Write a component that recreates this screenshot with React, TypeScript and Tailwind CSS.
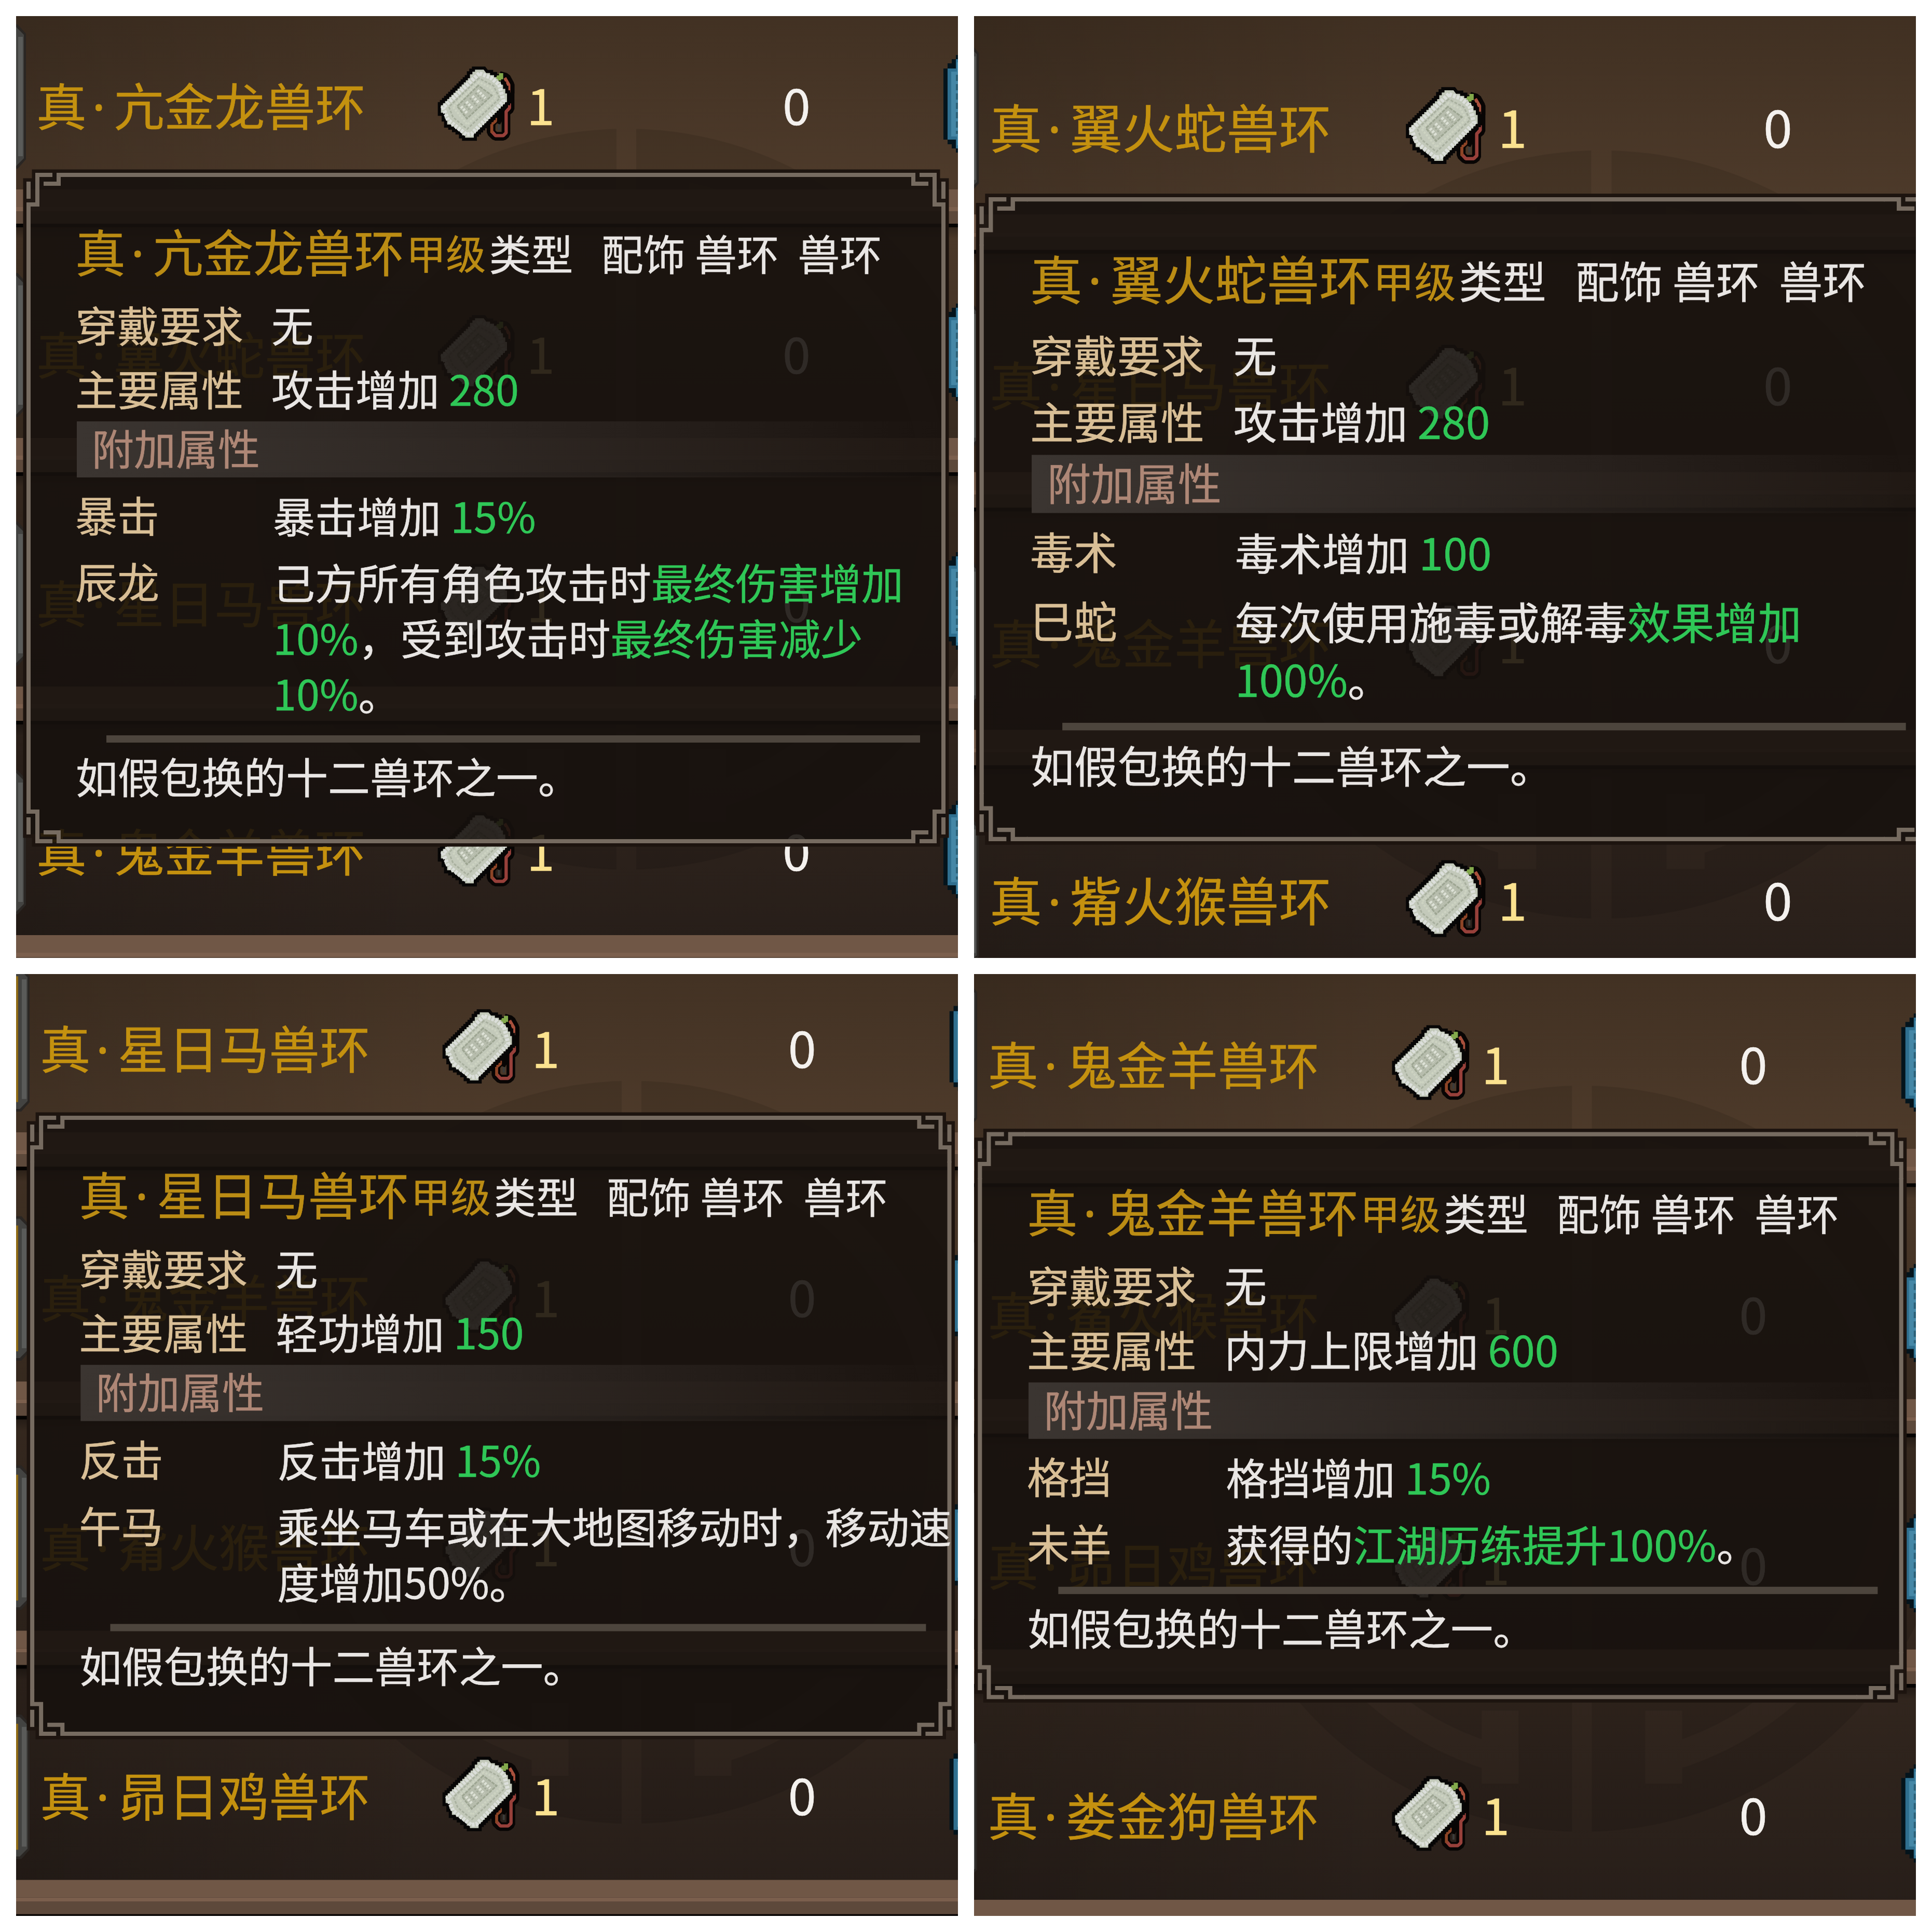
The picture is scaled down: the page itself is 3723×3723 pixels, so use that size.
type Segment = { text: string; green?: boolean };

type Trait = { label: string; lines: Segment[][] };

type Panel = {
  items: string[];
  main: Segment[];
  traits: Trait[];
  tooltipHeight: number;
  sealTop: number;
  view: { x: number; y: number; scale: number };
};

const panels: Panel[] = [
  {
    items: ['亢金龙', '翼火蛇', '星日马', '鬼金羊'],
    main: [{ text: '攻击增加 ' }, { text: '280', green: true }],
    traits: [
      { label: '暴击', lines: [[{ text: '暴击增加 ' }, { text: '15%', green: true }]] },
      {
        label: '辰龙',
        lines: [
          [{ text: '己方所有角色攻击时' }, { text: '最终伤害增加', green: true }],
          [{ text: '10%', green: true }, { text: '，受到攻击时' }, { text: '最终伤害减少', green: true }],
          [{ text: '10%', green: true }, { text: '。' }],
        ],
      },
    ],
    tooltipHeight: 1292,
    sealTop: 288,
    view: { x: -20, y: -72, scale: 1 },
  },
  {
    items: ['翼火蛇', '星日马', '鬼金羊', '觜火猴'],
    main: [{ text: '攻击增加 ' }, { text: '280', green: true }],
    traits: [
      { label: '毒术', lines: [[{ text: '毒术增加 ' }, { text: '100', green: true }]] },
      {
        label: '巳蛇',
        lines: [
          [{ text: '每次使用施毒或解毒' }, { text: '效果增加', green: true }],
          [{ text: '100%', green: true }, { text: '。' }],
        ],
      },
    ],
    tooltipHeight: 1197,
    sealTop: 286,
    view: { x: -31, y: -38.7, scale: 1.0367 },
  },
  {
    items: ['星日马', '鬼金羊', '觜火猴', '昴日鸡'],
    main: [{ text: '轻功增加 ' }, { text: '150', green: true }],
    traits: [
      { label: '反击', lines: [[{ text: '反击增加 ' }, { text: '15%', green: true }]] },
      {
        label: '午马',
        lines: [[{ text: '乘坐马车或在大地图移动时，移动速' }], [{ text: '度增加50%。' }]],
      },
    ],
    tooltipHeight: 1192,
    sealTop: 306,
    view: { x: -13, y: -102, scale: 1.0025 },
  },
  {
    items: ['鬼金羊', '觜火猴', '昴日鸡', '娄金狗'],
    main: [{ text: '内力上限增加 ' }, { text: '600', green: true }],
    traits: [
      { label: '格挡', lines: [[{ text: '格挡增加 ' }, { text: '15%', green: true }]] },
      {
        label: '未羊',
        lines: [[{ text: '获得的' }, { text: '江湖历练提升100%', green: true }, { text: '。' }]],
      },
    ],
    tooltipHeight: 1085,
    sealTop: 284,
    view: { x: -33, y: -72, scale: 1.007 },
  },
];

function Name({ beast }: { beast: string }) {
  return (
    <>
      真<span className="inline-block w-[0.54em] pr-[0.06em] text-center font-['Noto_Sans',sans-serif]">·</span>
      {beast}兽环
    </>
  );
}

function RichText({ segments }: { segments: Segment[] }) {
  return (
    <>
      {segments.map((s, i) => (
        <span key={i} className={s.green ? 'text-[#2fc757]' : undefined}>
          {s.text}
        </span>
      ))}
    </>
  );
}

/* Jade token with its red cord */
function TokenIcon() {
  return (
    <svg className="w-[150px] h-[144px] shrink-0" viewBox="65 84 450 432">
      <g fill="none" strokeLinejoin="bevel">
        <path d="M425 140L462 150L484 190V240" stroke="#080504" strokeWidth="58" />
        <path d="M488 185V330L464 350V475L448 488H402L378 465V415L402 385" stroke="#080504" strokeWidth="50" />
        <path d="M440 200L495 300L430 420L380 400Z" fill="#080504" />
        <path d="M457 150L480 190V235" stroke="#a9503c" strokeWidth="19" />
        <path d="M484 298V325L465 345V468L448 484H404L382 460" stroke="#97403a" strokeWidth="19" />
        <path d="M382 468V418L404 400V378" stroke="#8d4426" strokeWidth="17" />
        <path d="M423 418V450" stroke="#3c3c3a" strokeWidth="12" />
      </g>
      <path
        d="M285 103H335L350 122H372V134H395V146H412L424 172H434V190H447V214H460V240H470V290H458V303H446V316H434V328H422V340H410V352H398V364H386V376H374V388H362V400H350V412H338V424H326V436H314V448H302V460H290V472H278V496H228V482H210V460H190V446H170V432H148V420H124V385H110V352H88V308H100V296H112V284H124V272H136V260H148V248H160V236H172V224H184V212H196V200H208V188H220V176H232V164H244V152H256V130H270V115H285Z"
        fill="#c3c9ba"
        stroke="#070606"
        strokeWidth="36"
        strokeLinejoin="miter"
        paintOrder="stroke"
      />
      <g fill="none">
        <path d="M310 124L100 322L130 395L235 478L265 474L450 285L425 190L375 148Z" stroke="#dcdfdb" strokeWidth="24" strokeDasharray="15 7" />
        <path d="M307 152L134 318L158 378L240 446L428 268L392 196Z" stroke="#a9b09f" strokeWidth="9" strokeDasharray="16 8" />
        <path d="M307 174L158 318L240 420L408 262L372 205Z" stroke="#cdd3c2" strokeWidth="12" strokeDasharray="12 7" />
        <path d="M304 194L182 314L238 386L382 252Z" fill="#b7bdad" stroke="#9da592" strokeWidth="9" strokeDasharray="20 5" />
        <path d="M205 315L240 355M235 288L275 330M270 255L310 298M300 222L345 268" stroke="#dde1d6" strokeWidth="17" strokeDasharray="12 7" />
        <path d="M222 300L260 342M255 268L295 312M288 238L330 282" stroke="#a0a796" strokeWidth="9" strokeDasharray="10 8" />
      </g>
      <path d="M412 136H424V123H448V158H436V166H418V155H407Z" fill="#83a94c" />
    </svg>
  );
}

function SlotEdge() {
  return (
    <svg className="w-[39px] h-[278px] shrink-0 mb-[28px]" viewBox="0 0 39 278">
      <path d="M0 0H23L39 18V260L23 278H0Z" fill="#2a2623" />
      <path d="M0 5H20L35 20V258L20 273H0Z" fill="#434341" />
      <path d="M24 24H33V254H24Z" fill="#5a5b59" />
      <path d="M0 18H17V260H0Z" fill="#8f6a14" />
    </svg>
  );
}

function BlueButton() {
  return (
    <svg className="w-[57px] h-[188px] shrink-0" viewBox="0 0 57 188">
      <path d="M0 26H8V16H16V8H24V0H57V188H24V180H16V172H8V163H0Z" fill="#04141c" />
      <path d="M8 26H24V8H57V180H24V163H8Z" fill="#2f6f8f" />
      <path d="M15 32H26V14H57V174H26V157H15Z" fill="#4587a6" />
      <path d="M26 38V152" stroke="#2c6178" strokeWidth="4" strokeDasharray="12 6" />
    </svg>
  );
}

function ItemRow({ beast }: { beast: string }) {
  return (
    <div className="h-[479px]">
      <div className="flex items-center h-[406px] pt-[76px] bg-linear-to-b from-black/30 to-transparent to-[22px]">
        <SlotEdge />
        <div className="w-[772px] ml-[20px] mt-[4px] text-[97px] leading-none text-[#c4910f]">
          <Name beast={beast} />
        </div>
        <TokenIcon />
        <div className="w-[493px] ml-[23px] mb-[4px] text-[97px] leading-none text-[#fbe28f]">1</div>
        <div className="w-[310px] mb-[4px] text-[97px] leading-none text-[#f4f1ee]">0</div>
        <BlueButton />
      </div>
      <div className="h-[34px] bg-[#705746]" />
      <div className="h-[8px] bg-[#7b5f4d]" />
      <div className="h-[24px] bg-[#5d493b]" />
      <div className="h-[7px] bg-[#050302]" />
    </div>
  );
}

/* Faint round seal behind the list */
function Seal({ top }: { top: number }) {
  return (
    <svg className="absolute left-[481px] w-[1430px] h-[1430px]" style={{ top }} viewBox="-715 -715 1430 1430">
      <defs>
        <mask id="seal">
          <circle r="714" fill="#fff" />
          <circle r="622" fill="#000" />
          <circle r="570" fill="#fff" />
          <path d="M-192 482H-121V622H-192ZM121 482H192V622H121Z" fill="#000" />
          <path d="M-121 -714H121V714H-121Z" fill="#fff" />
          <path d="M-19 -715H19V715H-19Z" fill="#000" />
        </mask>
      </defs>
      <circle r="714" fill="#000" fillOpacity="0.1" mask="url(#seal)" />
    </svg>
  );
}

function Corner() {
  return (
    <g fill="#766b60">
      <path d="M0 17H8V50H0Z" />
      <path d="M0 57H17V0H50V8H25V65H8V90H0Z" />
      <path d="M33 17H58V0H90V8H66V25H33Z" />
    </g>
  );
}

function TooltipFrame({ height }: { height: number }) {
  const w = 1771;
  const h = height;
  return (
    <svg className="absolute inset-0 w-full h-full overflow-visible" viewBox={`0 0 ${w} ${h}`}>
      <path
        d={`M11 -6H${w - 11}V11H${w + 6}V${h - 11}H${w - 11}V${h + 6}H11V${h - 11}H-6V11H11Z`}
        fill="#17110e"
        fillOpacity="0.89"
      />
      <path
        d={`M14 -3H${w - 14}V14H${w + 3}V${h - 14}H${w - 14}V${h + 3}H14V${h - 14}H-3V14H14Z`}
        fill="none"
        stroke="#1d140f"
        strokeWidth="7"
      />
      <path
        d={`M88 4H${w - 88}M88 ${h - 4}H${w - 88}M4 88V${h - 88}M${w - 4} 88V${h - 88}`}
        stroke="#766b60"
        strokeWidth="8"
      />
      <Corner />
      <g transform={`translate(${w} 0) scale(-1 1)`}>
        <Corner />
      </g>
      <g transform={`translate(0 ${h}) scale(1 -1)`}>
        <Corner />
      </g>
      <g transform={`translate(${w} ${h}) scale(-1 -1)`}>
        <Corner />
      </g>
    </svg>
  );
}

function Tooltip({ panel }: { panel: Panel }) {
  return (
    <div
      className="absolute left-[40px] top-[374px] w-[1771px] text-[81px] text-[#e9e6e4] whitespace-pre"
      style={{ height: panel.tooltipHeight }}
    >
      <TooltipFrame height={panel.tooltipHeight} />
      <div className="relative flex flex-col pt-[88px] pl-[94px]">
        {/* Title */}
        <div className="flex items-center h-[120px] leading-none">
          <span className="text-[97px] mt-[6px] text-[#bb8c14]">
            <Name beast={panel.items[0]} />
          </span>
          <span className="text-[77px] ml-[3px] mt-[9px] text-[#bb8c14]">甲级</span>
          <span className="ml-[6px] mt-[9px]">类型   配饰 兽环  兽环</span>
        </div>

        {/* Requirement and main stat */}
        <div className="flex h-[123px] mt-[21px] leading-[123px]">
          <div className="w-[378px] text-[#d9bf96]">穿戴要求</div>
          <div>无</div>
        </div>
        <div className="flex h-[123px] leading-[123px]">
          <div className="w-[378px] text-[#d9bf96]">主要属性</div>
          <div>
            <RichText segments={panel.main} />
          </div>
        </div>

        <div className="h-[108px] w-[1668px] ml-[3px] mt-[4px] pl-[29px] leading-[98px] text-[#ae8776] bg-linear-to-r from-[#3b3531] via-[#332c28]/70 to-transparent">
          附加属性
        </div>

        {/* Extra stats */}
        <div className="flex flex-col mt-[18px] gap-[21px] leading-[107px]">
          {panel.traits.map((trait) => (
            <div key={trait.label} className="flex">
              <div className="w-[381px] -mt-[2px] text-[#d9bf96]">{trait.label}</div>
              <div>
                {trait.lines.map((line, i) => (
                  <div key={i}>
                    <RichText segments={line} />
                  </div>
                ))}
              </div>
            </div>
          ))}
        </div>

        <div className="h-[14px] w-[1568px] ml-[60px] mt-[30px] bg-[#4d453d]" />
        <div className="mt-[9px] ml-[1px] leading-[107px]">如假包换的十二兽环之一。</div>
      </div>
    </div>
  );
}

function Screen({ panel }: { panel: Panel }) {
  const { x, y, scale } = panel.view;
  return (
    <div className="w-[1815px] h-[1815px] overflow-hidden bg-[#241b17]">
      <div
        className="relative w-[1864px] h-[1916px] origin-top-left bg-linear-to-b from-[#3f2f21] from-0% via-[#4d3a2a] via-20% to-[#271e19] to-97%"
        style={{ transform: `translate(${x}px, ${y}px) scale(${scale})` }}
      >
        <div className="absolute inset-0 bg-linear-to-r from-black/16 to-transparent to-45%" />
        <Seal top={panel.sealTop} />
        <div className="relative">
          {panel.items.map((beast) => (
            <ItemRow key={beast} beast={beast} />
          ))}
        </div>
        <Tooltip panel={panel} />
      </div>
    </div>
  );
}

export default function App() {
  return (
    <div className="grid grid-cols-[1815px_1815px] gap-[31px] w-[3723px] h-[3723px] p-[31px] bg-white font-['Noto_Sans_CJK_SC',sans-serif] [-webkit-text-stroke:0.6px]">
      {panels.map((panel) => (
        <Screen key={panel.items[0]} panel={panel} />
      ))}
    </div>
  );
}
